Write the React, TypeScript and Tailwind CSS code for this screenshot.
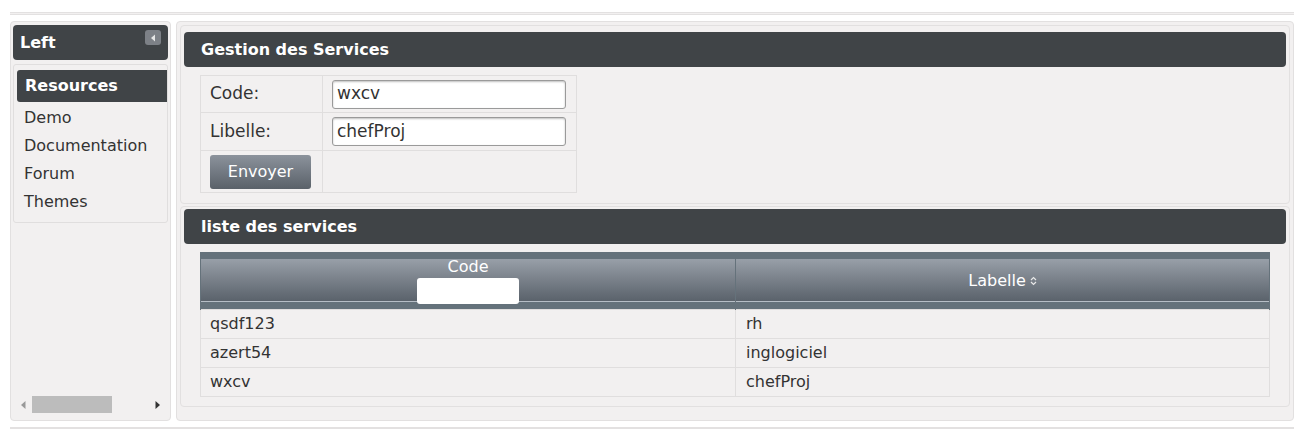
import React from "react";

const FONT = { fontFamily: '"DejaVu Sans", Verdana, sans-serif' };

const rows = [
  { code: "qsdf123", label: "rh" },
  { code: "azert54", label: "inglogiciel" },
  { code: "wxcv", label: "chefProj" },
];

function Header({ children }: { children: React.ReactNode }) {
  return (
    <div className="flex h-[35px] items-center rounded-[4px] bg-[#404447] pl-[17px] text-[16px] font-bold text-white">
      {children}
    </div>
  );
}

function SortIcon() {
  return (
    <svg width="7" height="10" viewBox="0 0 7 10" className="ml-[4px] inline-block">
      <path d="M1 4 L3.5 1.5 L6 4" fill="none" stroke="#e8e8e8" strokeWidth="1.2" />
      <path d="M1 6 L3.5 8.5 L6 6" fill="none" stroke="#e8e8e8" strokeWidth="1.2" />
    </svg>
  );
}

export default function App() {
  return (
    <div className="h-[440px] bg-white px-[10px] text-[#333]" style={FONT}>
      <div className="pt-[12px]">
        <div className="h-[3px] border-y border-[#e3e1e1] bg-[#f2f0f0]" />
      </div>

      <div className="mt-[6px] flex gap-[5px]">
        {/* left column */}
        <div className="flex h-[400px] w-[161px] flex-col rounded-[4px] border border-[#e2e0e0] bg-[#f2f0f0] p-[2px] pt-[3px]">
          <div className="relative flex h-[35px] items-center rounded-[4px] bg-[#404447] pl-[7px] text-[16px] font-bold text-white">
            Left
            <span className="absolute right-[7px] top-[5px] flex h-[15px] w-[16px] items-center justify-center rounded-[3px] bg-[#7d8187]">
              <svg width="6" height="8" viewBox="0 0 6 8">
                <path d="M5 0.5 L1 4 L5 7.5 Z" fill="#e6e6e6" />
              </svg>
            </span>
          </div>
          <div className="mt-[4px] rounded-[3px] border border-[#e0dede] pb-[6px] pl-[3px] pt-[5px]">
            <div className="flex h-[32px] items-center rounded-l-[3px] bg-[#404447] pl-[8px] text-[16px] font-bold text-white">
              Resources
            </div>
            <ul className="mt-[2px] pl-[7px] text-[16px] leading-[28px] text-[#333]">
              <li>Demo</li>
              <li>Documentation</li>
              <li>Forum</li>
              <li>Themes</li>
            </ul>
          </div>
          <div className="mt-auto mb-[5px] flex items-center px-[8px]">
            <svg width="5" height="8" viewBox="0 0 5 8">
              <path d="M4.5 0 L0 4 L4.5 8 Z" fill="#999" />
            </svg>
            <div className="ml-[6px] h-[17px] w-[80px] bg-[#bcbcbc]" />
            <div className="flex-1" />
            <svg width="5" height="8" viewBox="0 0 5 8">
              <path d="M0.5 0 L5 4 L0.5 8 Z" fill="#333" />
            </svg>
          </div>
        </div>

        {/* main column */}
        <div className="flex h-[400px] flex-1 flex-col gap-[2px] rounded-[4px] border border-[#e2e0e0] bg-[#f2f0f0] p-[3px]">
          <div className="h-[179px] rounded-[4px] border border-[#e2e0e0] px-[3px] pt-[6px]">
            <Header>Gestion des Services</Header>
            <table className="ml-[16px] mt-[8px] border-collapse text-[17px] text-[#333]">
              <tbody>
                <tr className="h-[37px]">
                  <td className="w-[122px] border border-[#e0dede] pl-[9px]">Code:</td>
                  <td className="w-[254px] border border-[#e0dede] pl-[9px]">
                    <div className="flex h-[29px] w-[234px] items-center rounded-[3px] border border-[#9a9a9a] bg-white pl-[4px] shadow-[inset_0_1px_2px_rgba(0,0,0,0.25)]">
                      wxcv
                    </div>
                  </td>
                </tr>
                <tr className="h-[38px]">
                  <td className="border border-[#e0dede] pl-[9px]">Libelle:</td>
                  <td className="border border-[#e0dede] pl-[9px]">
                    <div className="flex h-[29px] w-[234px] items-center rounded-[3px] border border-[#9a9a9a] bg-white pl-[4px] shadow-[inset_0_1px_2px_rgba(0,0,0,0.25)]">
                      chefProj
                    </div>
                  </td>
                </tr>
                <tr className="h-[42px]">
                  <td className="border border-[#e0dede] pl-[9px]">
                    <div className="flex h-[34px] w-[101px] items-center justify-center rounded-[3px] bg-gradient-to-b from-[#8c939c] to-[#5a6169] text-[16px] text-white">
                      Envoyer
                    </div>
                  </td>
                  <td className="border border-[#e0dede]" />
                </tr>
              </tbody>
            </table>
          </div>

          <div className="h-[201px] rounded-[4px] border border-[#e2e0e0] px-[3px] pt-[2px]">
            <Header>liste des services</Header>
            <table className="ml-[16px] mt-[8px] w-[1070px] border-collapse text-[16px] text-[#333]">
              <thead>
                <tr>
                  <th className="w-[535px] border-x border-[#65727b] p-0 font-normal text-white">
                    <div className="flex h-[57px] flex-col items-center border-y-[7px] border-[#65727b] bg-gradient-to-b from-[#989fa8] to-[#59616a] shadow-[inset_0_-1px_0_#b6bec6]">
                      <span className="leading-[16px]">Code</span>
                      <div className="mt-[3px] h-[26px] w-[102px] shrink-0 rounded-[3px] bg-white" />
                    </div>
                  </th>
                  <th className="border-x border-[#65727b] p-0 font-normal text-white">
                    <div className="flex h-[57px] items-center justify-center border-y-[7px] border-[#65727b] bg-gradient-to-b from-[#989fa8] to-[#59616a] pt-[1px] shadow-[inset_0_-1px_0_#b6bec6]">
                      Labelle
                      <SortIcon />
                    </div>
                  </th>
                </tr>
              </thead>
              <tbody>
                {rows.map((r) => (
                  <tr key={r.code} className="h-[29px]">
                    <td className="border border-[#e0dede] pl-[9px]">{r.code}</td>
                    <td className="border border-[#e0dede] pl-[10px]">{r.label}</td>
                  </tr>
                ))}
              </tbody>
            </table>
          </div>
        </div>
      </div>

      <div className="mt-[6px] h-[2px] bg-[#e3e1e1]" />
    </div>
  );
}
